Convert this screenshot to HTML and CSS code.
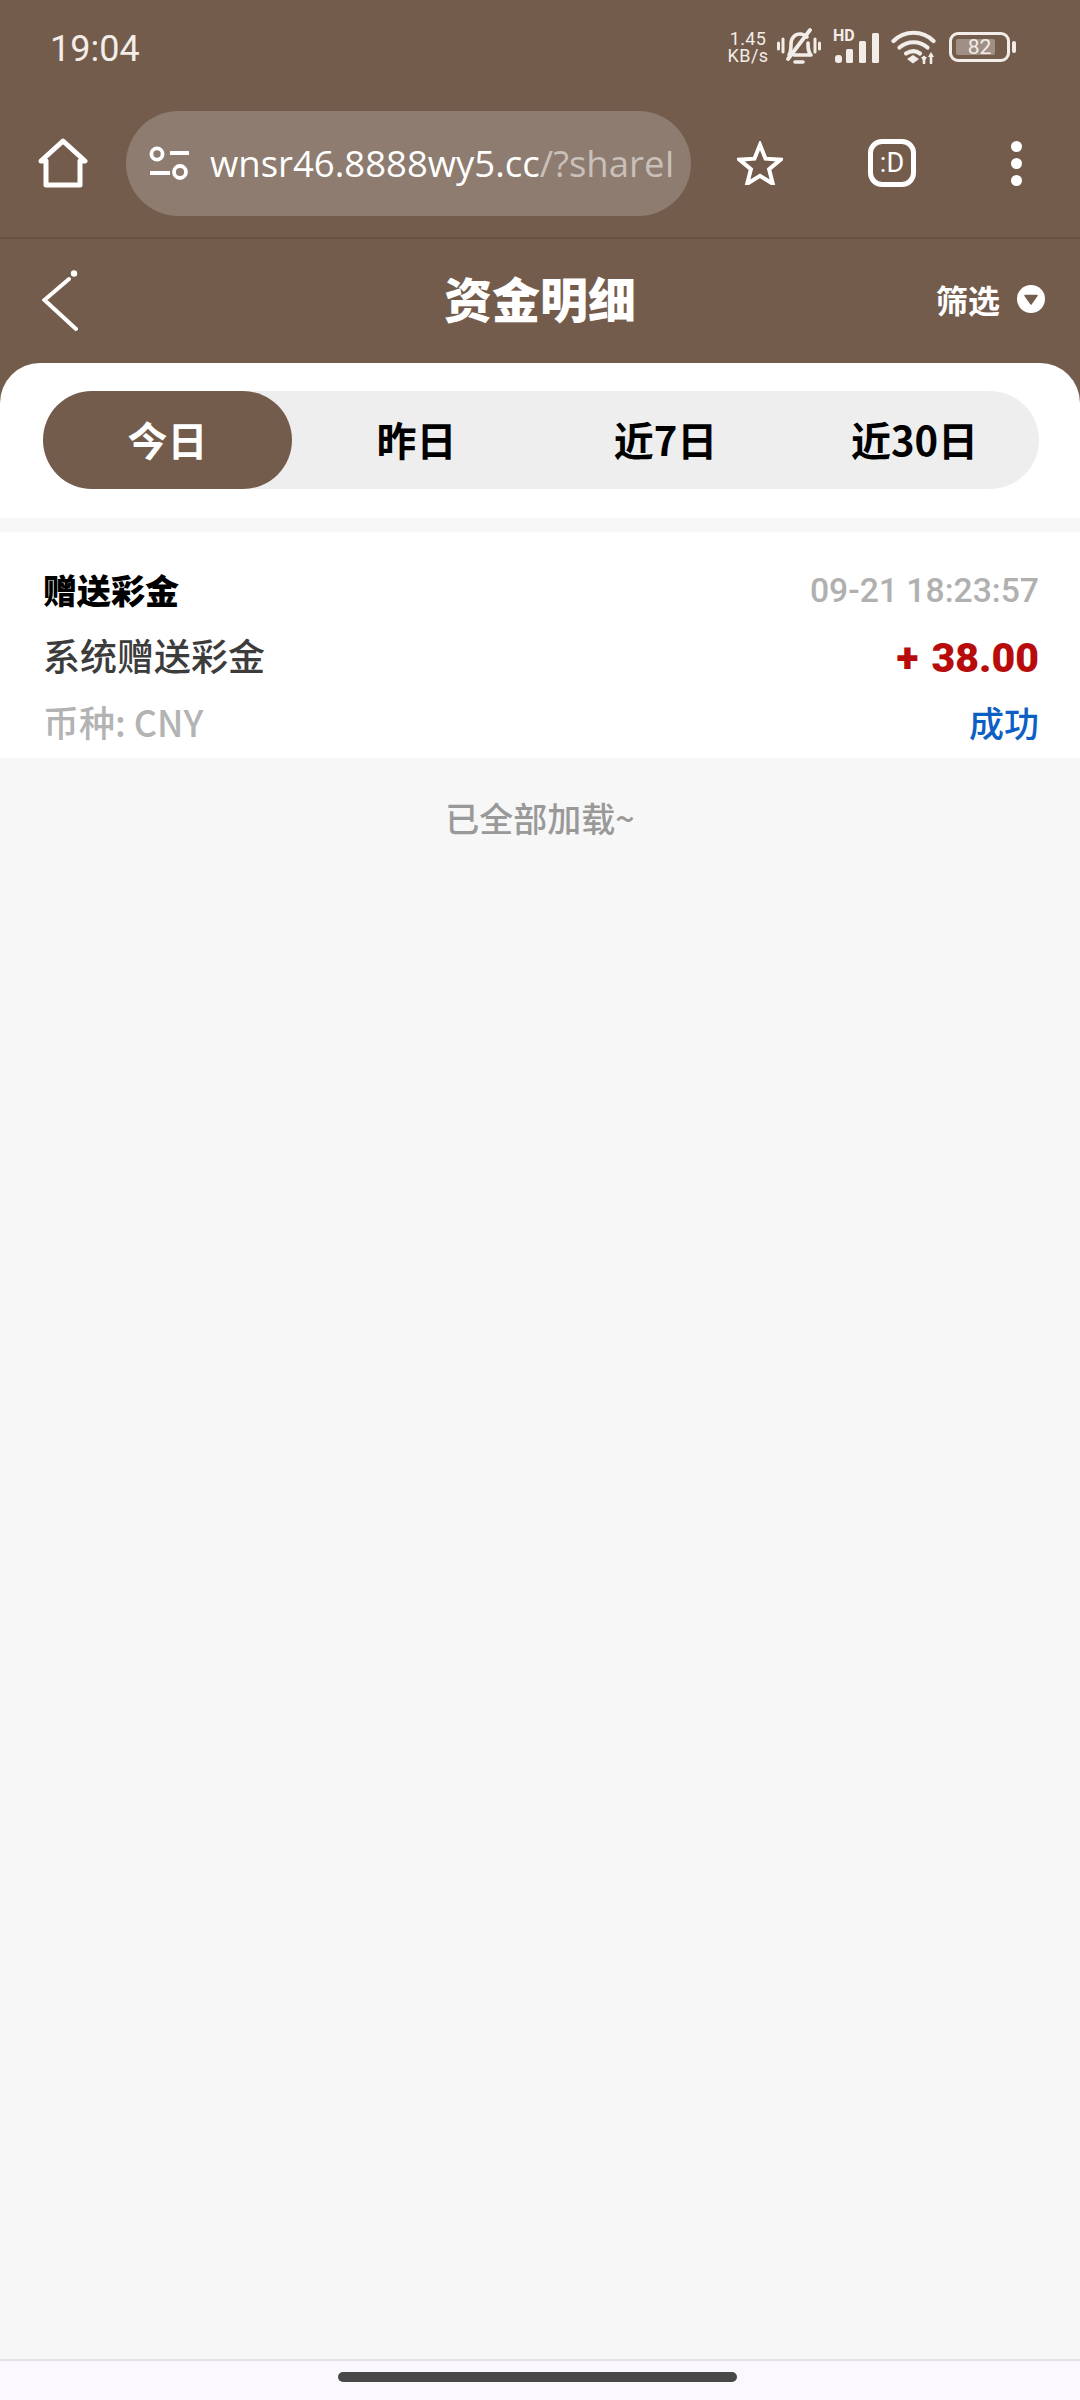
FILE: index.html
```html
<!DOCTYPE html>
<html lang="zh-CN">
<head>
    <meta charset="UTF-8">
    <meta name="viewport" content="width=device-width, initial-scale=1.0">
    <title>资金明细</title>
    <link rel="stylesheet" href="styles.css">
</head>
<body>
    <div class="page">
        <!-- 状态栏 -->
        <div class="status-bar">
            <span class="clock">19:04</span>
            <div class="status-icons">
                <div class="net-speed"><span>1.45</span><span>KB/s</span></div>
                <svg class="ic-bell" width="44" height="38" viewBox="0 0 44 38" fill="none" stroke="#f2ede8" stroke-linecap="round" stroke-linejoin="round">
                    <path d="M1.500 15v6M6 11v13M38 11v13M42.500 15v6" stroke-width="3"/>
                    <path d="M12 27c2-3 2-6 2-11 0-6 4-10 9-10 3 0 5 1 7 3M31 15c0 5 0 9 3 12H17" stroke-width="3.600"/>
                    <path d="M18 34h8" stroke-width="3.600"/>
                    <path d="M11 31 33 2" stroke-width="3.800"/>
                </svg>
                <div class="signal">
                    <span class="hd">HD</span>
                    <svg width="46" height="30" viewBox="0 0 46 30" fill="#f2ede8">
                        <rect x="1" y="22" width="7" height="8" rx="3"/>
                        <rect x="12" y="16" width="7" height="14" rx="1.500"/>
                        <rect x="25" y="8" width="7" height="22" rx="1.500"/>
                        <rect x="38" y="0" width="7" height="30" rx="1.500"/>
                    </svg>
                </div>
                <svg class="ic-wifi" width="46" height="34" viewBox="0 0 46 34" fill="none" stroke="#f2ede8" stroke-width="4.200" stroke-linecap="round">
                    <path d="M2.500 11c11-11 29-11 40 0"/>
                    <path d="M8.500 17.500c8-7 20-7 28 0"/>
                    <path d="M15 23.500c5-3 10-3 14 0"/>
                    <path d="M16 29l6-4 6 4-6 4.500z" fill="#f2ede8" stroke="none"/>
                    <path d="M33 33v-6M40 33v-8" stroke-width="2.600"/>
                    <path d="M30 27h6l-3 5zM37 27h6l-3-5z" fill="#f2ede8" stroke="none"/>
                </svg>
                <div class="battery">
                    <div class="battery-body">
                        <div class="battery-level"></div>
                        <span class="battery-num">82</span>
                    </div>
                    <div class="battery-cap"></div>
                </div>
            </div>
        </div>

        <!-- 浏览器工具栏 -->
        <div class="toolbar">
            <svg class="ic-home" width="50" height="50" viewBox="0 0 50 50" fill="none" stroke="#fff" stroke-width="5" stroke-linejoin="round" stroke-linecap="round">
                <path d="M3 23 25 3l22 20h-5v24H8V23z"/>
            </svg>
            <div class="url-pill">
                <svg class="ic-tune" width="42" height="34" viewBox="0 0 42 34" fill="none" stroke="#fff" stroke-width="3.800">
                    <circle cx="9" cy="8" r="5.600"/>
                    <path d="M22 7h19M2 27h20"/>
                    <circle cx="32" cy="26" r="6"/>
                </svg>
                <div class="url-text">wnsr46.8888wy5.cc<span class="url-rest">/?shareI</span></div>
            </div>
            <div class="tool-slot star-slot">
                <svg width="46" height="44" viewBox="0 0 48 46" fill="none" stroke="#fff" stroke-width="4.200" stroke-linejoin="miter">
                    <path d="M24 4l5.800 14.500 15.700 1-12 10 3.900 15.200L24 36.400 10.600 44.700l3.900-15.200-12-10 15.700-1z"/>
                </svg>
            </div>
            <div class="tool-slot tab-slot">
                <div class="tab-count">:D</div>
            </div>
            <div class="tool-slot menu-slot">
                <div class="menu-dots"><i></i><i></i><i></i></div>
            </div>
        </div>

        <!-- 页面标题 -->
        <div class="nav-head">
            <svg class="ic-back" width="40" height="62" viewBox="0 0 40 62" fill="none" stroke="#fff" stroke-linecap="round">
                <path d="M27 9 2.500 30 34 59" stroke-width="4" stroke-linejoin="miter"/>
                <circle cx="32" cy="3.500" r="3.200" fill="#fff" stroke="none"/>
            </svg>
            <h1>资金明细</h1>
            <div class="filter">
                <span>筛选</span>
                <svg width="28" height="28" viewBox="0 0 28 28">
                    <circle cx="14" cy="14" r="14" fill="#fff"/>
                    <path d="M8 10.500h12l-6 8.500z" fill="#745c4c" stroke="#745c4c" stroke-width="1.500" stroke-linejoin="round"/>
                </svg>
            </div>
        </div>

        <div class="content">
            <div class="sheet">
                <div class="tabs">
                    <div class="tab active">今日</div>
                    <div class="tab">昨日</div>
                    <div class="tab">近7日</div>
                    <div class="tab">近30日</div>
                </div>
            </div>

            <div class="record">
                <div class="row">
                    <span class="rec-type">赠送彩金</span>
                    <span class="rec-time">09-21 18:23:57</span>
                </div>
                <div class="row">
                    <span class="rec-desc">系统赠送彩金</span>
                    <span class="rec-amount">+ 38.00</span>
                </div>
                <div class="row">
                    <span class="rec-currency">币种: CNY</span>
                    <span class="rec-status">成功</span>
                </div>
            </div>

            <div class="all-loaded">已全部加载~</div>
        </div>

        <div class="gesture-bar"><div class="handle"></div></div>
    </div>
</body>
</html>
```

FILE: styles.css
```css
* {
    margin: 0;
    padding: 0;
    box-sizing: border-box;
}

body {
    background-color: #f7f7f7;
    font-family: "Noto Sans CJK SC", "Noto Sans", sans-serif;
    overflow: hidden;
}

.page {
    height: 2400px;
    display: flex;
    flex-direction: column;
}

/* status bar */
.status-bar {
    height: 94px;
    background: #745c4c;
    display: flex;
    align-items: center;
    justify-content: space-between;
    padding: 0 64px 0 50px;
    color: #f2ede8;
}

.clock {
    font-family: Roboto, sans-serif;
    font-size: 36px;
    margin-top: 3px;
}

.status-icons {
    display: flex;
    align-items: center;
}

.net-speed {
    width: 44px;
    display: flex;
    flex-direction: column;
    align-items: center;
    font-family: Roboto, sans-serif;
    font-size: 18px;
    line-height: 17px;
    letter-spacing: 0.4px;
    margin-right: 7px;
}

.ic-bell {
    margin-right: 12px;
}

.signal {
    width: 48px;
    height: 36px;
    position: relative;
    margin-right: 10px;
}

.signal svg {
    display: block;
    margin-top: 4px;
    margin-left: 1px;
}

.hd {
    position: absolute;
    left: 0;
    top: -1px;
    font-family: Roboto, sans-serif;
    font-size: 16px;
    font-weight: 700;
    line-height: 16px;
}

.ic-wifi {
    margin-right: 12px;
}

.battery {
    display: flex;
    align-items: center;
}

.battery-body {
    width: 61px;
    height: 30px;
    border: 3px solid #f2ede8;
    border-radius: 9px;
    position: relative;
    display: flex;
    align-items: center;
    justify-content: center;
}

.battery-level {
    position: absolute;
    left: 4px;
    top: 4px;
    bottom: 4px;
    width: 39px;
    background: #a08f84;
    border-radius: 2px;
}

.battery-num {
    position: relative;
    font-family: Roboto, sans-serif;
    font-size: 21px;
    line-height: 20px;
}

.battery-cap {
    width: 4px;
    height: 12px;
    margin-left: 2px;
    background: #f2ede8;
    border-radius: 2px;
}

/* browser toolbar */
.toolbar {
    height: 145px;
    background: #745c4c;
    border-bottom: 2px solid #69513f;
    display: flex;
    align-items: center;
    padding: 0 0 5px 38px;
}

.ic-home {
    flex: none;
}

.url-pill {
    width: 565px;
    height: 105px;
    margin-left: 38px;
    background: #8d7c6f;
    border-radius: 53px;
    display: flex;
    align-items: center;
    padding: 0 12px 0 22px;
}

.ic-tune {
    flex: none;
}

.url-text {
    margin-left: 20px;
    flex: 1;
    overflow: hidden;
    white-space: nowrap;
    font-family: "Open Sans", sans-serif;
    font-size: 36.500px;
    color: #fff;
}

.url-rest {
    color: #c9c0b9;
}

.tool-slot {
    display: flex;
    align-items: center;
    justify-content: center;
}

.star-slot {
    width: 138px;
}

.tab-slot {
    width: 126px;
}

.menu-slot {
    width: 122px;
}

.tab-count {
    width: 48px;
    height: 48px;
    border: 5px solid #fff;
    border-radius: 14px;
    display: flex;
    align-items: center;
    justify-content: center;
    font-family: Roboto, sans-serif;
    font-size: 27px;
    color: #fff;
}

.menu-dots {
    display: flex;
    flex-direction: column;
    gap: 6px;
}

.menu-dots i {
    display: block;
    width: 11px;
    height: 11px;
    border-radius: 50%;
    background: #fff;
}

/* page header */
.nav-head {
    height: 124px;
    background: #745c4c;
    position: relative;
    display: flex;
    align-items: center;
    justify-content: center;
    color: #fff;
}

.ic-back {
    position: absolute;
    left: 42px;
    top: 31px;
}

.nav-head h1 {
    font-size: 48px;
    font-weight: 900;
    line-height: 1;
    margin-bottom: 9px;
}

.filter {
    position: absolute;
    right: 35px;
    top: 42px;
    display: flex;
    align-items: center;
    gap: 17px;
    font-size: 32px;
    font-weight: 700;
    line-height: 36px;
}

/* content */
.content {
    flex: 1;
    background: #f7f7f7;
    position: relative;
}

.content::before {
    content: "";
    position: absolute;
    left: 0;
    right: 0;
    top: 0;
    height: 40px;
    background: #745c4c;
}

.sheet {
    position: relative;
    background: #fff;
    border-radius: 40px 40px 0 0;
    height: 155px;
    padding: 28px 41px 0 43px;
}

.tabs {
    height: 98px;
    background: #eee;
    border-radius: 49px;
    display: grid;
    grid-template-columns: repeat(4, 1fr);
}

.tab {
    display: flex;
    align-items: center;
    justify-content: center;
    padding-bottom: 3px;
    font-size: 40px;
    font-weight: 700;
    color: #000;
}

.tab.active {
    background: #745c4c;
    border-radius: 49px;
    color: #fff;
}

.record {
    margin-top: 14px;
    background: #fff;
    padding: 27px 41px 1px 43px;
}

.row {
    height: 66px;
    display: flex;
    align-items: center;
    justify-content: space-between;
}

.rec-type {
    font-size: 34px;
    font-weight: 900;
    color: #000;
    margin-bottom: 6px;
}

.rec-time {
    font-family: Roboto, sans-serif;
    font-size: 33.700px;
    font-weight: 500;
    color: #b0b0b0;
    margin-bottom: 3px;
}

.rec-desc {
    font-size: 37px;
    font-weight: 500;
    color: #3c3c3c;
    margin-bottom: 6px;
}

.rec-amount {
    font-family: Roboto, sans-serif;
    font-size: 41px;
    font-weight: 900;
    word-spacing: 3px;
    color: #b80c0c;
}

.rec-currency {
    font-size: 36px;
    font-weight: 500;
    color: #b3b3b3;
    margin-bottom: 6px;
}

.rec-status {
    font-size: 35px;
    font-weight: 500;
    color: #0d5fc4;
    margin-bottom: 6px;
}

.all-loaded {
    margin-top: 38px;
    text-align: center;
    font-size: 34px;
    font-weight: 500;
    line-height: 44px;
    color: #999;
}

/* gesture bar */
.gesture-bar {
    height: 41px;
    background: #fbf9fe;
    border-top: 2px solid #e4e2e9;
    display: flex;
    justify-content: center;
    padding-top: 11px;
}

.handle {
    width: 399px;
    height: 10px;
    margin-right: 5px;
    background: #484848;
    border-radius: 5px;
}
```
